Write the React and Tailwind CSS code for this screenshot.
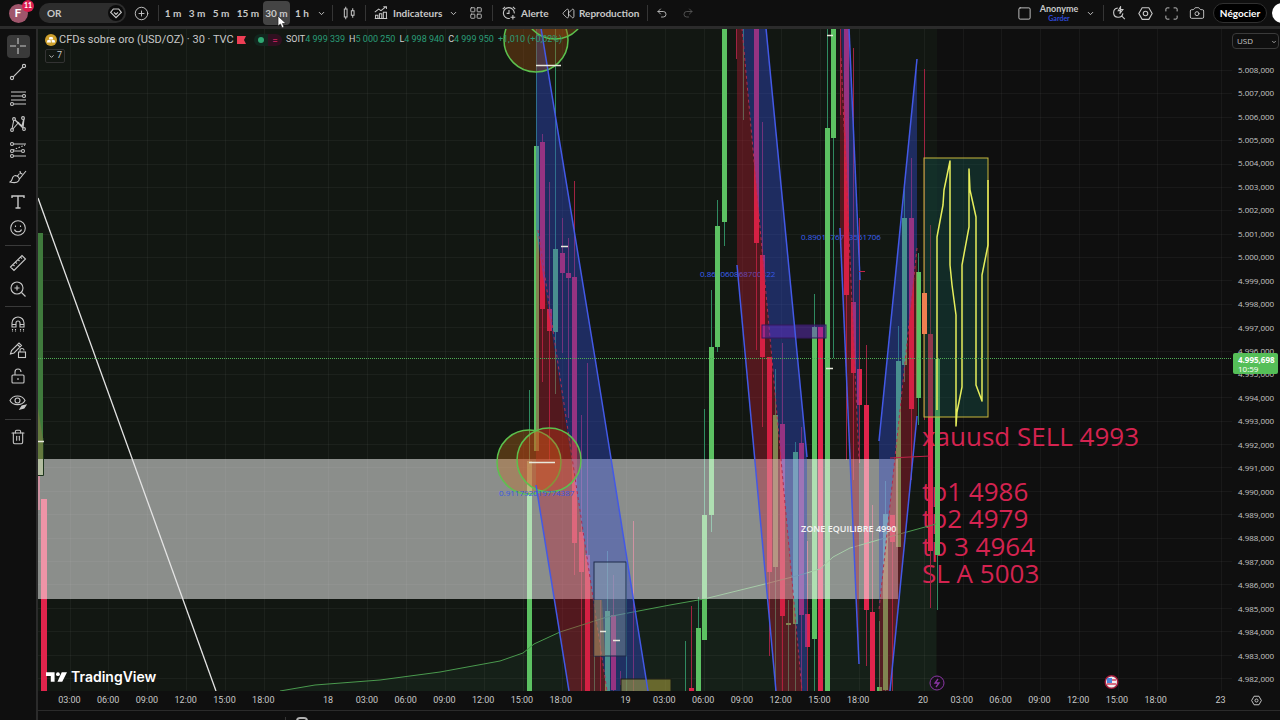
import { Camera, ChevronDown, Maximize, Rewind, Redo2, Undo2, LayoutGrid, CirclePlus, Trash2, Square } from 'lucide-react';

const UP = '#5cc162';
const DOWN = '#e0244c';
const WICK_UP = '#2f8a60';
const WICK_DOWN = '#a02342';

// [x, wick top, body top, body bottom, wick bottom, direction]
const CANDLES = [
  [529, 390, 461, 691, 691, 1],
  [536, 28, 146, 451, 451, 1],
  [542, 134, 142, 309, 382, 0],
  [549, 182, 309, 331, 460, 0],
  [555, 28, 249, 332, 394, 1],
  [562, 218, 253, 273, 353, 0],
  [568, 238, 273, 278, 418, 0],
  [574, 181, 277, 543, 575, 0],
  [581, 415, 532, 572, 691, 0],
  [587, 363, 555, 691, 691, 0],
  [594, 655, 691, 691, 691, 1],
  [600, 600, 691, 691, 691, 0],
  [607, 551, 611, 691, 691, 1],
  [613, 575, 615, 690, 691, 0],
  [620, 671, 685, 685, 685, 0],
  [626, 560, 691, 691, 691, 1],
  [633, 521, 691, 691, 691, 0],
  [685, 641, 691, 691, 691, 1],
  [691, 606, 688, 691, 691, 0],
  [698, 597, 628, 691, 691, 1],
  [704, 409, 515, 640, 640, 1],
  [711, 290, 347, 515, 532, 1],
  [717, 200, 226, 347, 352, 1],
  [724, 28, 28, 222, 246, 1],
  [736, 28, 59, 59, 59, 0],
  [743, 28, 120, 120, 120, 1],
  [756, 28, 28, 243, 350, 0],
  [762, 122, 255, 357, 427, 0],
  [769, 357, 357, 572, 656, 0],
  [775, 369, 415, 567, 691, 1],
  [782, 343, 424, 616, 691, 0],
  [788, 600, 623, 625, 691, 1],
  [795, 442, 452, 624, 691, 1],
  [801, 427, 443, 615, 691, 0],
  [807, 541, 614, 647, 691, 0],
  [814, 294, 327, 639, 691, 1],
  [820, 327, 327, 691, 691, 0],
  [827, 28, 128, 691, 691, 1],
  [833, 28, 28, 138, 358, 1],
  [840, 28, 115, 115, 115, 0],
  [846, 28, 28, 295, 460, 0],
  [853, 48, 302, 373, 480, 0],
  [859, 218, 369, 405, 463, 0],
  [866, 345, 405, 610, 666, 0],
  [872, 505, 612, 691, 691, 0],
  [879, 621, 687, 691, 691, 1],
  [885, 481, 514, 690, 691, 1],
  [892, 515, 515, 542, 691, 0],
  [898, 326, 361, 547, 547, 1],
  [904, 187, 218, 365, 382, 1],
  [911, 158, 218, 409, 480, 0],
  [918, 253, 272, 398, 425, 1],
  [924, 69, 293, 334, 420, 0],
  [930, 225, 334, 551, 608, 0],
  [937, 359, 359, 555, 610, 1],
];

const BLUE_AREAS = [
  '536,28 541,28 595,358 648,691 607,691 536,230',
  '742,28 766,28 807,457 807,691 802,691',
  '841,28 849,28 859,278 859,460',
  '879,441 917,59 917,248 879,610',
];

const RED_AREAS = [
  '536,230 607,691 569,691 536,485',
  '737,28 742,28 802,691 776,691 737,265',
  '840,28 841,28 859,460 859,664 840,228',
  '879,610 917,248 917,416 890,691 879,691',
];

const CHANNEL_LINES = [
  '541,28 595,358 648,691',
  '536,485 569,691',
  '766,28 807,457',
  '737,265 776,691',
  '849,28 860,280',
  '840,228 859,664',
  '879,441 917,59',
  '890,691 917,416',
];

const MID_LINES = ['538,230 607,691', '742,28 802,691', '841,58 859,460', '917,248 879,610'];

const AVERAGE = '280,691 315,685 380,680 440,672 500,661 523,653 534,644 560,632 607,617 670,605 704,599 765,584 800,575 820,569 833,557 850,548 885,538 936,524';

const SCRIBBLE = '937,410 937,237 943,205 944,190 950,161 950,265 952,285 956,315 956,426 957,412 962,387 962,265 969,227 969,169 970,190 976,217 976,385 982,401 982,275 988,245 988,180';

const HOURS = ['03:00', '06:00', '09:00', '12:00', '15:00', '18:00'];
const TIMES = [...HOURS, '18', ...HOURS, '19', ...HOURS, '20', ...HOURS, '23'];
const GRID_X = [70, 108, 147, 186, 225, 264, 328, 367, 406, 445, 484, 523, 562, 626, 665, 704, 742, 781, 820, 859, 924, 963, 1001, 1040, 1079, 1118, 1157, 1221];

const PRICES = Array.from({ length: 27 }, (_, i) => {
  const p = 5008 - i;
  return `${Math.floor(p / 1000)}.${String(p % 1000).padStart(3, '0')},000`;
});

const NOTES = [
  [446, 'xauusd SELL 4993'],
  [501, 'tp1 4986'],
  [528, 'tp2 4979'],
  [556, 'tp 3 4964'],
  [583, 'SL A 5003'],
];

const Icon = ({ size = 18, children }) => (
  <svg width={size} height={size} viewBox="0 0 18 18" fill="none" stroke="currentColor" strokeWidth="1.1" aria-hidden="true">
    {children}
  </svg>
);

const TOOLS = [
  ['Réticule', <path d="M9 1v6M9 11v6M1 9h6M11 9h6" />],
  ['Ligne de tendance', <><circle cx="3" cy="15" r="1.6" /><circle cx="15" cy="3" r="1.6" /><path d="M4.200 13.800 13.800 4.200" /></>],
  ['Fibonacci', <><path d="M2 3h15M2 7h11M2 11h15M5 15h12" /><circle cx="15" cy="7" r="1.500" fill="#0f0f0f" /><circle cx="3" cy="15" r="1.500" /></>],
  ['Figures', <><path d="M3 14 5 4l8 7 2-8M3 15l7-8M5 4l9 9M15 4l-1 9" /><circle cx="3" cy="15" r="1.400" fill="#0f0f0f" /><circle cx="5" cy="4" r="1.400" fill="#0f0f0f" /><circle cx="14" cy="3" r="1.400" fill="#0f0f0f" /><circle cx="15" cy="14" r="1.400" fill="#0f0f0f" /></>],
  ['Prévision', <><path d="M4 3h13M4 10h8M4 15h13" /><path d="M4 9l12-5" strokeDasharray="1.500 1.500" /><circle cx="3" cy="3" r="1.500" fill="#0f0f0f" /><circle cx="3" cy="10" r="1.500" fill="#0f0f0f" /><circle cx="3" cy="15" r="1.500" fill="#0f0f0f" /><circle cx="14" cy="10" r="1.500" /></>],
  ['Pinceau', <path d="M1 15c2-1 2-2 2.500-4C4 9 6 8 8 9s3 3 1.500 5S5 16 1 15zM8.500 9l2-2.500M10.500 12 17 4M11 4c0 2 1 3 2.500 3" />],
  ['Texte', <path d="M3 5V3h12v2M9 3v12M6.500 15h5" strokeWidth="1.400" />],
  ['Émojis', <><circle cx="9" cy="9" r="7.300" /><path d="M5.500 10.500c1 3 6 3 7 0M6.500 6.500v1.500M11.500 6.500v1.500" /></>],
  null,
  ['Mesurer', <path d="M1.500 13 13 1.500 16.500 5 5 16.500zM4 10.500l1.500 1.500M6.500 8l1.500 1.500M9 5.500 10.500 7M11.500 3 13 4.500" />],
  ['Zoom', <><circle cx="8" cy="8" r="6" /><path d="m12.500 12.500 4 4M8 5.500v5M5.500 8h5" /></>],
  null,
  ['Aimant', <><path d="M3 12V8a6 6 0 0 1 12 0v4h-4V8a2 2 0 0 0-4 0v4zM3 9.500h4M11 9.500h4" /><path d="M3.500 14v3M6.500 14v3M11.500 14v3M14.500 14v3" strokeDasharray="1.500 1" /></>],
  ['Mode dessin', <><path d="m1.500 13 1-3.500L10 2l2.500 2.500L5 12zM8.500 3.500 11 6" /><rect x="9.500" y="11" width="7" height="5.500" /><path d="M11 11V9.500a2 2 0 0 1 4 0" /></>],
  ['Verrouiller', <><rect x="3" y="8" width="12" height="8" rx="1" /><path d="M6 8V5a3 3 0 0 1 6 0M9 11v2" /></>],
  ['Masquer', <><path d="M1 7.500C4 1.500 13 1.500 16 7.500 13 13 4 13 1 7.500z" /><circle cx="8.500" cy="7.500" r="2.500" /><path d="m11 16 2-3 4-1-2 3z" fill="currentColor" /></>],
  null,
  ['Supprimer', 'trash'],
];

const INTERVALS = [
  ['1 m', 'w-6'],
  ['3 m', 'w-6'],
  ['5 m', 'w-6'],
  ['15 m', 'w-[30px]'],
  ['30 m', 'w-[27px]'],
  ['1 h', 'w-6'],
];

const Divider = ({ className }) => (
  <span className={`flex shrink-0 justify-center ${className}`}>
    <span className="h-4 w-px bg-[#353535]" />
  </span>
);

const IconButton = ({ label, className, children }) => (
  <button aria-label={label} className={`flex h-full shrink-0 items-center justify-center ${className}`}>
    {children}
  </button>
);

const Header = () => (
  <header className="flex h-[29px] shrink-0 items-center border-b-3 border-[#2b2b2b] font-['Lato',sans-serif] text-[10px] font-bold">
    <div className="relative flex w-9 shrink-0 justify-center">
      <span className="flex size-[19px] items-center justify-center rounded-full bg-[#a0566c] text-xs font-bold text-white">F</span>
      <span className="absolute -top-1 right-0.5 flex h-3 w-3 items-center justify-center rounded-full bg-[#dc2050] text-[7px] font-bold text-white">11</span>
    </div>
    <button className="ml-[3px] flex h-5 w-[87px] shrink-0 items-center justify-between rounded-full bg-[#2d2d2d] pr-0.5 pl-2">
      OR
      <span className="flex size-4 items-center justify-center rounded-full bg-[#0b0b0b]">
        <Icon size={12}>
          <path d="M5 3h8l4 5-8 8-8-8zM6 8l3 3 3-3" strokeWidth="1.800" />
        </Icon>
      </span>
    </button>
    <IconButton label="Comparer" className="w-[30px]">
      <CirclePlus size={15} strokeWidth={1.5} />
    </IconButton>
    <Divider className="w-[5px]" />
    {INTERVALS.map(([label, width]) => (
      <button key={label} className={`relative h-6 shrink-0 rounded ${width} ${label === '30 m' ? 'bg-[#444444]' : ''}`}>
        {label}
        {label === '30 m' && (
          <svg className="absolute top-3.5 left-3.5 z-10" width="10" height="14" viewBox="0 0 10 14" aria-hidden="true">
            <path d="M1 1v10l2.500-2 1.500 4 2-1-1.500-3.500H9z" fill="#fff" stroke="#222" strokeWidth="0.700" />
          </svg>
        )}
      </button>
    ))}
    <IconButton label="Plus d'intervalles" className="w-3.5">
      <ChevronDown size={9} strokeWidth={2.5} />
    </IconButton>
    <Divider className="w-2" />
    <IconButton label="Bougies" className="w-[26px]">
      <Icon size={14}>
        <path d="M3 4h3.500v10H3zM4.800 1v3M4.800 14v3M12 6h3.500v6H12zM13.800 3v3M13.800 12v3" strokeWidth="1.300" />
      </Icon>
    </IconButton>
    <Divider className="w-1.5" />
    <button className="flex h-full w-[76px] shrink-0 items-center gap-[5px] pl-1.5">
      <Icon size={14}>
        <path d="M1 16h16M2 16v-4h3v4M7 16v-6h3v6M12 16V8h4v8M1 8l5-4 3 2 6-5M12 1h4v3" strokeWidth="1.300" />
      </Icon>
      Indicateurs
    </button>
    <IconButton label="Favoris" className="w-[18px]">
      <ChevronDown size={9} strokeWidth={2.5} />
    </IconButton>
    <IconButton label="Modèles" className="w-7">
      <LayoutGrid size={14} strokeWidth={1.5} />
    </IconButton>
    <Divider className="w-1" />
    <button className="flex h-full w-[62px] shrink-0 items-center gap-[5px] pl-2">
      <Icon size={14}>
        <path d="M15.800 9.500A7 7 0 1 0 10 16M9 5v4.500H6M1 4l3-3M14 1l3 3M14 11.500v6M11 14.500h6" strokeWidth="1.400" />
      </Icon>
      Alerte
    </button>
    <button className="flex h-full w-[86px] shrink-0 items-center gap-1 pl-1.5">
      <Rewind size={13} strokeWidth={1.7} />
      Reproduction
    </button>
    <Divider className="w-2.5" />
    <IconButton label="Annuler" className="w-5">
      <Undo2 size={12} strokeWidth={1.7} />
    </IconButton>
    <IconButton label="Rétablir" className="w-8 text-[#5a5a5a]">
      <Redo2 size={12} strokeWidth={1.7} />
    </IconButton>

    <div className="ml-auto flex h-full shrink-0 items-center">
      <IconButton label="Disposition" className="w-7">
        <Square size={15} strokeWidth={1.5} />
      </IconButton>
      <button className="flex w-[42px] flex-col items-center text-[9px] leading-[11px]">
        <span>Anonyme</span>
        <span className="text-[7px] leading-[9px] text-[#2f49d8]">Garder</span>
      </button>
      <IconButton label="Gérer les dispositions" className="w-[21px]">
        <ChevronDown size={9} strokeWidth={2.5} />
      </IconButton>
      <Divider className="w-[5px]" />
      <IconButton label="Recherche rapide" className="w-[26px]">
        <Icon size={14}>
          <path d="M7.500 2.500a6 6 0 1 0 6.500 7M12 12.500l4.500 4.500M11 1 8 6h3l-1 4 4-5.500h-3z" strokeWidth="1.400" />
        </Icon>
      </IconButton>
      <IconButton label="Paramètres" className="w-[26px]">
        <Icon size={15}>
          <path d="M5 2h8l4 7-4 7H5L1 9z" strokeWidth="1.300" />
          <circle cx="9" cy="9" r="2.700" strokeWidth="1.300" />
        </Icon>
      </IconButton>
      <IconButton label="Plein écran" className="w-[26px]">
        <Maximize size={15} strokeWidth={1.5} />
      </IconButton>
      <IconButton label="Instantané" className="w-[26px]">
        <Camera size={16} strokeWidth={1.4} />
      </IconButton>
      <button className="ml-[3px] h-5 w-[54px] rounded-full border border-[#303030] bg-black text-[10px] font-bold text-white">Négocier</button>
      <div className="ml-[5px] w-2 overflow-hidden">
        <button aria-label="Publier" className="block size-5 rounded-full bg-white" />
      </div>
    </div>
  </header>
);

const Toolbar = () => (
  <nav aria-label="Outils de dessin" className="flex w-[38px] shrink-0 flex-col items-center border-r-2 border-[#2b2b2b] pt-1">
    {TOOLS.map((tool, i) =>
      tool ? (
        <button key={tool[0]} aria-label={tool[0]} className="flex h-[26px] w-full items-center justify-center">
          <span className={`flex size-[23px] items-center justify-center rounded ${i === 0 ? 'bg-[#3a3a3a]' : ''}`}>
            {tool[1] === 'trash' ? <Trash2 size={16} strokeWidth={1.6} /> : <Icon>{tool[1]}</Icon>}
          </span>
        </button>
      ) : (
        <span key={i} className="flex h-[9px] w-[26px] items-center">
          <span className="h-px w-full bg-[#3a3a3a]" />
        </span>
      )
    )}
  </nav>
);

const Plot = () => (
  <svg className="block h-full w-full" viewBox="38 29 1194 662" preserveAspectRatio="xMinYMin slice" aria-hidden="true">
    <rect x="38" y="29" width="1194" height="662" fill="#0f0f0f" />
    <rect x="38" y="29" width="899" height="662" fill="#121712" />
    <polygon points={`${AVERAGE} 936,691`} fill="#152018" />
    <g stroke="#fff" strokeOpacity="0.045">
      {GRID_X.map((x) => (
        <path key={x} d={`M${x + 0.5} 29V691`} />
      ))}
      {PRICES.map((p, i) => (
        <path key={p} d={`M38 ${Math.round(70 + i * 23.38) + 0.5}H1232`} />
      ))}
    </g>
    <g fontSize="8" fill="#3c62f4">
      <text x="700" y="277">0.868060868700322</text>
      <text x="801" y="240">0.8901676703551706</text>
    </g>
    <g fontSize="26" fontWeight="500" fill="#d42350">
      {NOTES.map(([y, text]) => (
        <text key={text} x="922" y={y}>{text}</text>
      ))}
    </g>

    <rect x="38" y="233" width="5" height="242" fill="#3f7a3c" />
    <path d="M38 408 43 440V475H38z" fill="#8a7840" fillOpacity="0.500" />
    <rect x="38" y="475" width="2" height="35" fill={WICK_DOWN} />
    <rect x="41" y="499" width="6" height="192" fill={DOWN} />
    {CANDLES.map(([x, high, top, bottom, low, up]) => (
      <g key={x} fill={up ? UP : DOWN}>
        <rect x={x} y={high} width="1" height={low - high} fill={up ? WICK_UP : WICK_DOWN} />
        <rect x={x - 2} y={top} width="5" height={bottom - top} />
      </g>
    ))}

    <polyline points={AVERAGE} fill="none" stroke="#4a9a4e" />
    <rect x="38" y="459" width="860" height="140" fill="#fcfcfc" fillOpacity="0.520" />
    <path d="M38 475.500H43.500V438" fill="none" stroke="#1d351c" />
    {BLUE_AREAS.map((points) => (
      <polygon key={points} points={points} fill="#3049cc" fillOpacity="0.420" />
    ))}
    {RED_AREAS.map((points) => (
      <polygon key={points} points={points} fill="#c01c34" fillOpacity="0.370" />
    ))}
    {MID_LINES.map((points) => (
      <polyline key={points} points={points} fill="none" stroke="#b02c50" strokeDasharray="3 3" />
    ))}
    <rect x="594" y="562" width="32" height="94" fill="#9fb8b0" fillOpacity="0.350" stroke="#1c2a4a" />
    <path d="M594 600h8l3 56h-11z" fill="#b08040" fillOpacity="0.400" />
    <rect x="621" y="679" width="50" height="14" fill="#a09a3c" fillOpacity="0.600" stroke="#1b1d14" />
    <rect x="762" y="325" width="64" height="13" fill="#6a2fd0" fillOpacity="0.450" stroke="#35185c" />
    <g fill="#a85410" fillOpacity="0.350" stroke="#5cc14e" strokeWidth="1.500">
      <circle cx="536" cy="40" r="32" />
      <circle cx="555" cy="8" r="31" />
      <circle cx="529" cy="462" r="32" fill="#c8701c" />
      <circle cx="549" cy="460" r="32" fill="#d04018" />
    </g>
    {CHANNEL_LINES.map((points) => (
      <polyline key={points} points={points} fill="none" stroke="#4359e6" strokeWidth="1.500" />
    ))}
    <path d="M38 198 216 691" stroke="#e4e4e4" strokeWidth="1.300" />
    <path d="M536 65.500h25M561 246.500h7M827 35.500h6M826 368.500h7M529 462.500h26M600 631.500h6M613 640.500h7M38 441.500h6" stroke="#e8e8dc" strokeWidth="1.300" />
    <path d="M859 271.500h6M890 458 930 456" stroke="#c02348" />

    <rect x="924" y="158" width="64" height="259" fill="#16564a" fillOpacity="0.400" stroke="#c8b83c" />
    <rect x="922" y="293" width="5" height="41" fill="#f08050" />
    <polyline points={SCRIBBLE} fill="none" stroke="#e6ee5c" strokeWidth="1.500" strokeLinejoin="round" />
    <path d="M38 358.500H1232" stroke="#4fae55" strokeDasharray="1 1" />

    <text x="499" y="496" fontSize="8" fill="#3558e0">0.911792019774387</text>
    <text x="801" y="532" fontSize="9" fontWeight="600" fill="#f4f4f4">ZONE EQUILIBRE 4990</text>

    <g fill="none" stroke="#8a36a4">
      <circle cx="937" cy="683" r="7" fill="#150f18" />
      <path d="m938 679-3 4h4l-3 4" strokeWidth="1.300" />
    </g>
    <circle cx="1111.500" cy="682" r="7" fill="#a31c3c" />
    <circle cx="1111.500" cy="682" r="5.500" fill="#f0f0f0" />
    <path d="M1107 680h9M1107 684h9" stroke="#d0405c" strokeWidth="1.300" />
    <rect x="1107" y="678" width="5" height="5" fill="#4a84d8" />
  </svg>
);

const Value = ({ name, children }) => (
  <span>
    <span className="text-[#d0d0d0]">{name}</span>
    {children}
  </span>
);

const Legend = () => (
  <div className="absolute top-1 left-[7px] font-['Roboto',sans-serif]">
    <div className="flex h-3.5 items-center whitespace-nowrap">
      <svg width="12" height="12" viewBox="0 0 12 12" aria-hidden="true">
        <circle cx="6" cy="6" r="6" fill="#cda02c" />
        <path d="M4.500 3h3l.8 2.500h-4.600zM2.500 6h3l.5 2.500H1.800zM6.500 6h3l.7 2.500H6.800z" fill="#fff" />
      </svg>
      <h1 className="ml-0.5 w-[178px] text-[11px]">CFDs sobre oro (USD/OZ) · 30 · TVC</h1>
      <svg width="9" height="8" viewBox="0 0 9 8" aria-hidden="true">
        <path d="M0 0h9L7 4l2 4H0z" fill="#ee3f55" />
      </svg>
      <span className="ml-2 flex h-3 w-3.5 items-center justify-center rounded-l-full bg-[#12261e]">
        <span className="size-1.5 rounded-full bg-[#2fa873]" />
      </span>
      <span className="flex h-3 w-3.5 items-center justify-center rounded-r-full bg-[#301020] text-[10px] text-[#b81e58]">=</span>
      <div className="ml-1 flex gap-1 text-[9px] text-[#2a9d78]">
        <Value name="SOIT">4 999 339</Value>
        <Value name="H">5 000 250</Value>
        <Value name="L">4 998 940</Value>
        <Value name="C">4 999 950</Value>
        <span>+1,010 (+0,02%)</span>
      </div>
    </div>
    <button className="mt-0.5 flex h-3.5 w-5 items-center justify-center gap-0.5 rounded-xs border border-[#333] text-[9px]">
      <ChevronDown size={7} strokeWidth={3} />7
    </button>
  </div>
);

const PriceAxis = () => (
  <aside className="relative flex w-12 shrink-0 flex-col pt-1 text-[8px] font-medium">
    <div className="relative mr-px h-4">
      <select aria-label="Devise" defaultValue="USD" className="block h-full w-full appearance-none rounded-sm border border-[#3a3a3a] bg-[#0f0f0f] pl-1 text-[8px]">
        <option>USD</option>
      </select>
      <ChevronDown size={6} strokeWidth={3} className="pointer-events-none absolute top-1.5 right-0.5" />
    </div>
    <ul className="mt-[9px] flex flex-1 flex-col pl-1.5">
      {PRICES.map((price) => (
        <li key={price} className="flex flex-1 items-center">{price}</li>
      ))}
    </ul>
    <div className="absolute top-[324px] left-px flex h-[21px] w-[45px] flex-col justify-center rounded-xs bg-[#55bf58] pl-[5px] text-[8px] leading-[9px] font-bold text-white">
      4.995,698
      <span className="font-medium">10:59</span>
    </div>
  </aside>
);

const TimeAxis = () => (
  <div className="flex h-[19px] shrink-0 items-center pl-3 font-['Roboto',sans-serif] text-[9px]">
    {TIMES.map((time, i) => (
      <span key={i} className={`flex min-w-0 flex-1 justify-center ${time.includes(':') ? '' : 'pl-[26px]'}`}>
        {time}
      </span>
    ))}
    <button aria-label="Paramètres de l'échelle" className="flex w-10 shrink-0 justify-center pr-1.5">
      <Icon size={11}>
        <path d="M5 2h8l4 7-4 7H5L1 9z" strokeWidth="1.600" />
        <circle cx="9" cy="9" r="2.500" strokeWidth="1.600" />
      </Icon>
    </button>
  </div>
);

const App = () => (
  <div className="flex h-screen w-full flex-col overflow-hidden bg-[#0f0f0f] font-['Open_Sans','Noto_Sans',sans-serif] text-[#c8c8c8]">
    <Header />
    <div className="flex min-h-0 flex-1">
      <Toolbar />
      <div className="flex min-w-0 flex-1 flex-col">
        <div className="flex min-h-0 flex-1">
          <main className="relative min-w-0 flex-1 overflow-hidden">
            <Plot />
            <Legend />
            <div className="absolute bottom-1.5 left-2 flex items-center gap-1 text-white">
              <svg width="21" height="12" viewBox="0 0 22 12" fill="currentColor" aria-hidden="true">
                <path d="M0 1h9v10H5V5H0zM16.500 1H22l-5 10h-5z" />
                <circle cx="12.500" cy="3" r="2" />
              </svg>
              <span className="font-['Inter',sans-serif] text-sm leading-4 font-semibold">TradingView</span>
            </div>
          </main>
          <PriceAxis />
        </div>
        <TimeAxis />
        <footer className="flex h-2.5 shrink-0 overflow-hidden border-t border-[#2b2b2b] pl-[247px]">
          <Divider className="w-px pt-1.5" />
          <span className="mt-1.5 ml-2.5 h-3 w-3 rounded-sm border-2 border-[#b0b0b0]" />
        </footer>
      </div>
    </div>
  </div>
);

export default App;
